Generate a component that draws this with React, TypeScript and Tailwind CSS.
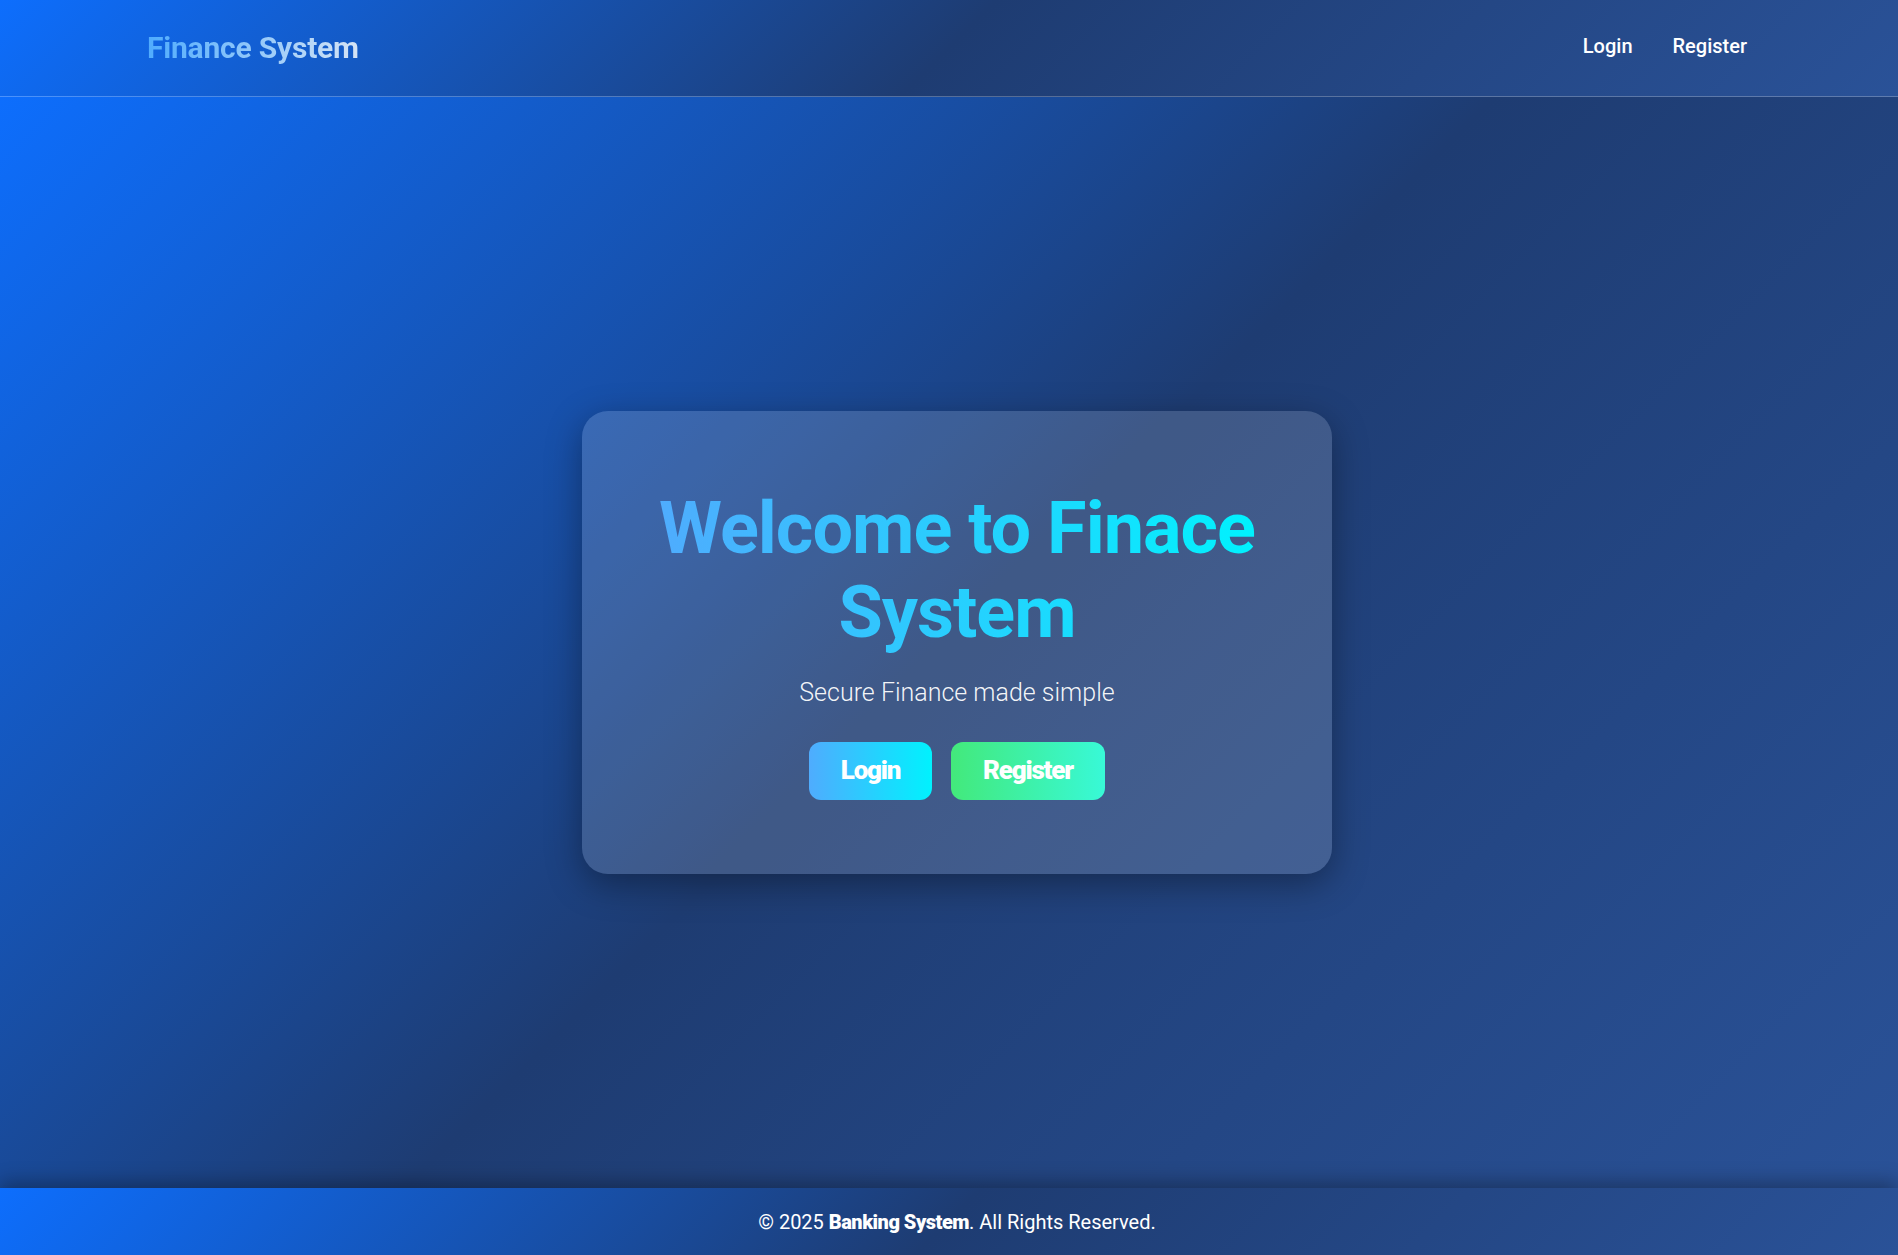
export default function App() {
  const bg = "bg-[linear-gradient(135deg,#0d6efd_0%,#1e3c72_50%,#2a5298_100%)]";

  return (
    <div className="min-h-screen flex flex-col text-white font-['Roboto',sans-serif]">
      {/* Header */}
      <header className={`${bg} h-[97px] border-b border-white/25 flex items-center justify-between px-[147px]`}>
        <span className="mt-[-2px] text-[30px] font-bold bg-[linear-gradient(90deg,#4facfe,#d6e4f5)] bg-clip-text text-transparent tracking-[-0.2px]">
          Finance System
        </span>
        <nav className="flex items-center gap-[40px] mr-[4px] mt-[-4px]">
          <a className="text-[20px] font-medium text-white">Login</a>
          <a className="text-[20px] font-medium text-white">Register</a>
        </nav>
      </header>

      {/* Main */}
      <main className={`${bg} flex-1 flex items-center justify-center pl-[16px]`}>
        <div className="w-[750px] h-[463px] rounded-[26px] bg-white/15 shadow-[0_10px_35px_rgba(0,0,0,0.35)] flex flex-col items-center pt-[76px]">
          <h1 className="text-[72px] leading-[84px] font-bold text-center tracking-[-1px] bg-[linear-gradient(90deg,#4facfe,#00f2fe)] bg-clip-text text-transparent">
            Welcome to Finace
            <br />
            System
          </h1>
          <p className="mt-[19px] text-[25px] font-light text-white/95">Secure Finance made simple</p>
          <div className="mt-[30px] flex gap-[19px]">
            <button className="w-[123px] h-[58px] rounded-[12px] bg-[linear-gradient(90deg,#4facfe,#00f2fe)] text-[26px] font-black tracking-[-1.2px] text-white">
              Login
            </button>
            <button className="w-[154px] h-[58px] rounded-[12px] bg-[linear-gradient(90deg,#43e97b,#38f9d7)] text-[26px] font-black tracking-[-1.2px] text-white">
              Register
            </button>
          </div>
        </div>
      </main>

      {/* Footer */}
      <footer className={`${bg} h-[67px] flex items-center justify-center pl-[16px] shadow-[0_-6px_18px_rgba(0,0,0,0.3)] relative`}>
        <p className="text-[20px] text-white">
          © 2025 <span className="font-black tracking-[-0.5px]">Banking System</span>. All Rights Reserved.
        </p>
      </footer>
    </div>
  );
}
